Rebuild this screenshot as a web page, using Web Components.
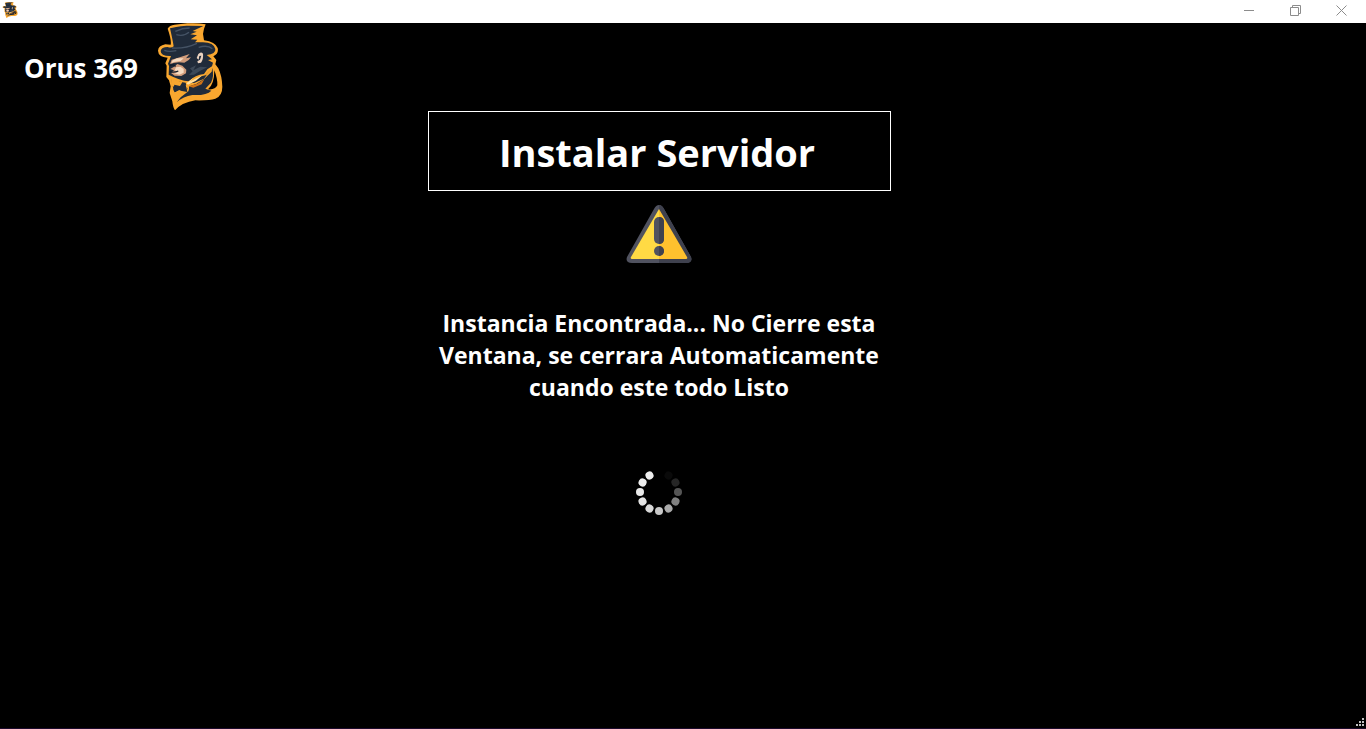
<!DOCTYPE html>
<html lang="es">
<head>
<meta charset="utf-8">
<title>Orus 369</title>
<style>
html, body { margin: 0; height: 100%; background: #000; }
body { font-family: "Open Sans", "Noto Sans", sans-serif; color: #fff; }
</style>
</head>
<body>
<app-window>
  <title-bar slot="bar"></title-bar>
  <brand-header>Orus 369</brand-header>
  <install-panel>
    <span slot="title">Instalar Servidor</span>
    <warning-icon slot="icon"></warning-icon>
    Instancia Encontrada... No Cierre esta Ventana, se cerrara Automaticamente cuando este todo Listo
    <loading-dots slot="progress"></loading-dots>
  </install-panel>
</app-window>
<script>
function define(name, html, setup) {
  customElements.define(name, class extends HTMLElement {
    constructor() {
      super();
      const root = this.attachShadow({ mode: "open" });
      root.innerHTML = html;
      if (setup) setup(root);
    }
  });
}

define("orus-logo", `
<style>:host{display:block} svg{display:block;width:100%;height:100%}</style>
<svg viewBox="6 9 204 264" preserveAspectRatio="none" aria-hidden="true">
  <path fill="#f9a72f" d="M41 26Q46 16 62 14L100 10Q130 8 155 13Q148 29 147 42L150 61Q184 66 191 84Q195 101 178 109L187 120L184 133L193 145Q204 168 205 200Q205 228 184 236Q166 242 124 241Q84 247 63 271Q57 263 55 244L47 219L50 199L45 181L37 171L38 137L34 130L41 113Q13 111 12 92Q13 77 34 73L50 74Q53 61 41 26Z"/>
  <path fill="#000" d="M181 151Q191 177 190 196Q184 210 162 208Q181 193 181 151Z"/>
  <path fill="#202b3a" d="M48 25Q60 20 98 17L148 18L116 33L128 35L109 43L129 46L110 58L130 59L123 67L147 67Q180 68 184 87Q186 102 158 105L174 118L162 120L177 128L174 139L160 148L150 162Q124 164 104 184Q78 182 44 164L45 138L42 131L51 108Q20 109 20 93Q22 81 41 81Q52 85 59 79Q56 60 48 25Z"/>
  <path fill="none" stroke="#455365" stroke-width="4" d="M64 34Q86 24 107 24M67 44Q90 50 105 37M54 84Q93 87 129 70M134 82Q161 74 175 86M31 91Q44 97 67 92"/>
  <path fill="#3c4958" d="M108 145L126 136L118 151L139 140L160 142L139 152L120 164L105 165L116 154Z"/>
  <path fill="#d19c7b" d="M107 102L82 110L53 119L48 132L59 129L75 127L91 128L104 120L111 112L96 115ZM70 132L85 137L97 149L96 160L82 168L62 167L51 159L60 151L49 147L59 141Z"/>
  <path fill="#f5dac0" d="M69 115L89 115L80 123L60 126L52 130L56 121ZM66 142L79 140L89 147L89 158L76 164L60 160L73 156L62 151Z"/>
  <path fill="none" stroke="#111d2d" stroke-width="4" d="M47 137L57 134L65 139M47 155Q60 159 73 153"/>
  <path fill="#ead2c0" d="M133 102Q141 93 147 101Q149 116 141 128L132 130L130 124L138 119L142 107L136 108L134 119L128 114Z"/>
  <path fill="#202b3a" d="M52 177Q68 185 95 188L98 201L105 213L89 210L79 217L60 217L56 202Z"/>
  <path fill="#f9a72f" d="M51 174Q64 181 85 187L78 198L61 194L57 211L63 216L75 210L99 216L95 196L106 184L121 190L98 202L104 213L78 238L63 256L54 224Z"/>
  <path fill="#202b3a" d="M105 193Q128 185 151 169L175 145Q181 170 171 188L154 206L172 212Q158 227 115 225Q88 229 68 247L80 232L105 212Z"/>
  <path fill="#f9a72f" d="M101 193L126 186L153 167L175 143L173 155L151 176L128 191L102 200Z"/>
  <path fill="#202b3a" d="M56 199L76 205L95 196L100 216L84 213L76 209L62 217ZM142 169L158 165L150 176L122 188L110 189Z"/>
  <path fill="#cf7217" d="M104 199L130 191L151 178L143 193L118 203Z"/>
  <path fill="#ffe0a1" d="M97 190L119 173L109 184L145 166L126 182L102 194Z"/>
</svg>`);

define("title-bar", `
<style>
:host{display:flex;justify-content:space-between;height:23px;background:#fff}
orus-logo{width:16px;height:16px;margin:2px}
nav{display:flex;height:20px;padding-right:2px}
button{width:46px;padding:0;border:0;background:none;display:grid;place-items:center}
svg{display:block;width:11px;height:11px;fill:none;stroke:#8c8c8c}
</style>
<orus-logo></orus-logo>
<nav aria-label="Ventana">
  <button aria-label="Minimizar"><svg viewBox="0 0 11 11"><path d="M0 5.5H10"/></svg></button>
  <button aria-label="Restaurar"><svg viewBox="0 0 11 11"><path d="M.5 2.5H8.5V10.5H.5ZM2.5 2.5V.5H10.5V8.5H8.5"/></svg></button>
  <button aria-label="Cerrar"><svg viewBox="0 0 11 11"><path d="M.5 .5L10.5 10.5M10.5 .5L.5 10.5"/></svg></button>
</nav>`);

define("brand-header", `
<style>
:host{display:flex;align-items:center;gap:18px;height:88px;padding-left:24px}
strong{padding-top:2px;font-size:26px;line-height:32px;font-weight:700;white-space:nowrap}
orus-logo{width:68px;height:88px}
</style>
<strong><slot></slot></strong><orus-logo></orus-logo>`);

define("warning-icon", `
<style>:host{display:block;width:66px;height:60px} svg{display:block}</style>
<svg width="66" height="60" viewBox="0 0 66 60" role="img" aria-label="Advertencia">
  <path fill="#50525f" d="M33 0Q36 0 38 4L65 52Q67 58 60 58H6Q-1 58 1 52L28 4Q30 0 33 0Z"/>
  <path fill="#3f414e" d="M33 0Q36 0 38 4L65 52Q67 58 60 58H33Z"/>
  <path fill="#ffda44" d="M33 4V54H6Q4 54 5 52Z"/>
  <path fill="#ffc12e" d="M33 4L61 52Q62 54 60 54H33Z"/>
  <rect x="28" y="12" width="10" height="27" rx="5" fill="#50525f"/>
  <path fill="#3f414e" d="M33 12Q38 12 38 17V34Q38 39 33 39Z"/>
  <circle cx="33" cy="46" r="5" fill="#50525f"/><path fill="#3f414e" d="M33 41A5 5 0 0 1 33 51Z"/>
</svg>`);

define("loading-dots", `
<style>:host{display:block;width:46px;height:46px} svg{display:block}</style>
<svg width="46" height="46" viewBox="-23 -23 46 46" role="img" aria-label="Cargando"></svg>`, root => {
  const tones = ["#0a0a0a", "#262626", "#555", "#808080", "#aaa", "#c8c8c8", "#d8d8d8", "#e2e2e2", "#e8e8e8", "#ececec", "#eee"];
  root.querySelector("svg").innerHTML = tones.map((tone, i) =>
    `<circle cy="-19" r="4" fill="${tone}" transform="rotate(${(i + 1) * 30})"/>`).join("");
});

define("install-panel", `
<style>
:host{display:flex;flex-direction:column;align-items:center;margin-right:48px}
h1{box-sizing:border-box;width:463px;max-width:100%;margin:0;padding:13px 4px 11px 0;border:1px solid #fff;
  font-size:38px;line-height:54px;font-weight:700;text-align:center}
.icon{margin-top:14px}
p{width:452px;max-width:100%;margin:42px 0 0;font-size:23px;line-height:32px;font-weight:700;text-align:center}
.progress{margin-top:66px}
</style>
<h1><slot name="title"></slot></h1>
<div class="icon"><slot name="icon"></slot></div>
<p role="status"><slot></slot></p>
<div class="progress"><slot name="progress"></slot></div>`);

define("app-window", `
<style>
:host{box-sizing:border-box;display:flex;flex-direction:column;min-height:100vh;border-bottom:1px solid #1c0b2c}
main{flex:1}
footer{display:flex;justify-content:flex-end;padding:0 2px 2px 0}
svg{display:block}
</style>
<slot name="bar"></slot>
<main><slot></slot></main>
<footer><svg width="8" height="8" viewBox="0 0 8 8" fill="#c0c0c0" aria-hidden="true">
<path d="M6 0h2v2H6zM3 3h2v2H3zM6 3h2v2H6zM0 6h2v2H0zM3 6h2v2H3zM6 6h2v2H6z"/></svg></footer>`);
</script>
</body>
</html>
